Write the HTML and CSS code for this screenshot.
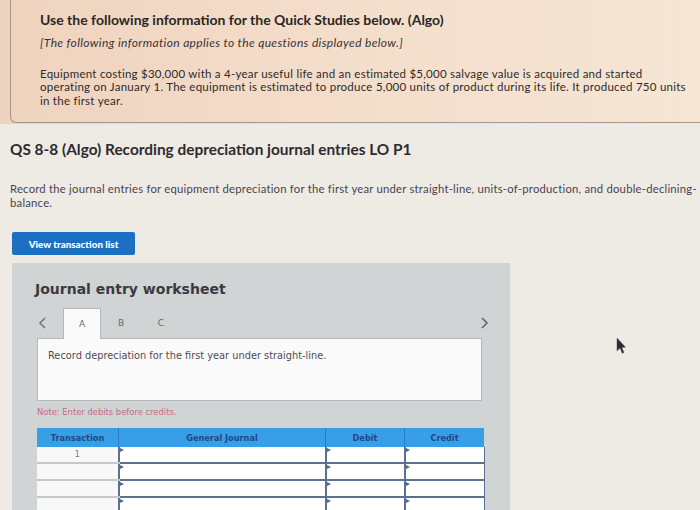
FILE: index.html
```html
<!DOCTYPE html>
<html>
<head>
<meta charset="utf-8">
<link rel="stylesheet" href="styles.css">
</head>
<body>
<div class="page">
  <header class="info-wrap">
    <section class="info">
      <h1 class="info-title">Use the following information for the Quick Studies below. (Algo)</h1>
      <p class="info-sub">[The following information applies to the questions displayed below.]</p>
      <p class="info-text">Equipment costing $30,000 with a 4-year useful life and an estimated $5,000 salvage value is acquired and started<br>operating on January 1. The equipment is estimated to produce 5,000 units of product during its life. It produced 750 units<br>in the first year.</p>
    </section>
  </header>
  <main class="question">
    <h2 class="q-title">QS 8-8 (Algo) Recording depreciation journal entries LO P1</h2>
    <p class="q-text">Record the journal entries for equipment depreciation for the first year under straight-line, units-of-production, and double-declining-<br>balance.</p>
    <button class="btn">View transaction list</button>
    <div class="worksheet">
      <h3 class="ws-title">Journal entry worksheet</h3>
      <div class="tabs">
        <span class="chev">
          <svg width="9" height="12" viewBox="0 0 9 12"><path d="M7 1 L2 6 L7 11" fill="none" stroke="#777" stroke-width="1.6"/></svg>
        </span>
        <span class="tab active">A</span>
        <span class="tab">B</span>
        <span class="tab">C</span>
        <span class="spacer"></span>
        <span class="chev">
          <svg width="9" height="12" viewBox="0 0 9 12"><path d="M2 1 L7 6 L2 11" fill="none" stroke="#666" stroke-width="1.6"/></svg>
        </span>
      </div>
      <div class="ws-content">Record depreciation for the first year under straight-line.</div>
      <p class="ws-note">Note: Enter debits before credits.</p>
      <table class="journal">
        <thead>
          <tr><th class="c-tr">Transaction</th><th class="c-gj">General Journal</th><th class="c-dr">Debit</th><th class="c-cr">Credit</th></tr>
        </thead>
        <tbody>
          <tr><td class="c-tr">1</td><td class="c-gj in"></td><td class="c-dr in"></td><td class="c-cr in"></td></tr>
          <tr><td class="c-tr"></td><td class="c-gj in"></td><td class="c-dr in"></td><td class="c-cr in"></td></tr>
          <tr><td class="c-tr"></td><td class="c-gj in"></td><td class="c-dr in"></td><td class="c-cr in"></td></tr>
          <tr><td class="c-tr"></td><td class="c-gj in"></td><td class="c-dr in"></td><td class="c-cr in"></td></tr>
        </tbody>
      </table>
    </div>
  </main>
  <svg class="cursor" width="11" height="18" viewBox="0 0 11 18"><path d="M1 1 L1 14 L4 11 L6.3 16.3 L8 15.5 L5.8 10.4 L9.5 10.2 Z" fill="#2a2a2e" stroke="#5a5a5e" stroke-width="0.5"/></svg>
</div>
</body>
</html>
```

FILE: styles.css
```css
html, body {
  margin: 0;
  padding: 0;
}
body {
  width: 700px;
  height: 510px;
  overflow: hidden;
  background: #eeebe5;
  font-family: Lato, "Open Sans", sans-serif;
  color: #2e2a2a;
}
.page {
  position: relative;
  width: 700px;
  height: 510px;
  overflow: hidden;
}
.info-wrap {
  background: linear-gradient(90deg, #efd3be 0%, #f3ddca 45%, #f6e6d5 100%);
  height: 124px;
  overflow: hidden;
}
.info {
  margin-left: 10px;
  width: 720px;
  height: 123px;
  box-sizing: border-box;
  border-left: 1px solid #a4978c;
  border-bottom: 1px solid #a4978c;
  border-bottom-left-radius: 6px;
  padding: 11px 0 0 29px;
}
.info-title {
  margin: 0;
  font-size: 14px;
  line-height: 17px;
  font-weight: 700;
  color: #2a2626;
}
.info-sub {
  margin: 7px 0 0;
  font-size: 12px;
  line-height: 15px;
  font-style: italic;
  letter-spacing: 0.35px;
  color: #3a3434;
}
.info-text {
  margin: 17px 0 0;
  font-size: 11.5px;
  line-height: 13.4px;
  letter-spacing: 0.25px;
  color: #2e2a2a;
  white-space: nowrap;
}
.question {
  padding: 16px 0 0 10px;
}
.q-title {
  margin: 0;
  font-size: 15.4px;
  line-height: 19px;
  font-weight: 700;
  color: #2e2a2e;
}
.q-text {
  margin: 23px 0 0;
  font-size: 11.3px;
  line-height: 13.6px;
  letter-spacing: 0.22px;
  color: #4a4250;
  white-space: nowrap;
}
.btn {
  display: block;
  margin: 23px 0 0 2px;
  width: 123px;
  height: 23px;
  border: none;
  border-radius: 2px;
  background: #1d6fc2;
  color: #ffffff;
  font-family: Lato, sans-serif;
  font-weight: 900;
  font-size: 9.8px;
  padding: 0;
}
.worksheet {
  margin: 8px 0 0 2px;
  width: 498px;
  height: 260px;
  box-sizing: border-box;
  background: #d1d4d5;
  padding: 17px 28px 0 25px;
  font-family: "DejaVu Sans", Verdana, sans-serif;
}
.ws-title {
  margin: 0 0 0 -2px;
  font-size: 14px;
  line-height: 18px;
  font-weight: 700;
  color: #3a3a40;
}
.tabs {
  display: flex;
  align-items: stretch;
  height: 30px;
  margin: 10px -8px 0 0;
  position: relative;
  z-index: 1;
}
.chev {
  display: flex;
  align-items: center;
  justify-content: center;
  width: 12px;
}
.chev:first-child {
  width: 11px;
  margin-right: 15px;
}
.tab {
  display: flex;
  align-items: center;
  justify-content: center;
  width: 40px;
  font-size: 9px;
  color: #6a6a6e;
}
.tab.active {
  width: 36px;
  background: #fafafa;
  border: 1px solid #b4b8bc;
  border-bottom: none;
  margin-bottom: -1px;
}
.spacer {
  flex: 1;
}
.ws-content {
  height: 63px;
  box-sizing: border-box;
  background: #fafafa;
  border: 1px solid #b4b8bc;
  padding: 11px 0 0 10px;
  font-size: 9.8px;
  line-height: 12px;
  color: #504a55;
}
.ws-note {
  margin: 6px 0 0;
  font-size: 8.4px;
  line-height: 10px;
  color: #c56a7c;
}
.journal {
  margin-top: 11px;
  width: 446px;
  border-collapse: collapse;
  table-layout: fixed;
}
.journal th {
  height: 19px;
  padding: 0;
  background: #379ee8;
  color: #1d4a86;
  font-size: 8.2px;
  font-weight: 700;
  border-left: 1px solid #2a7cc0;
}
.journal th:first-child {
  border-left: none;
}
.c-tr { width: 81px; }
.c-gj { width: 206px; }
.c-dr { width: 78px; }
.c-cr { width: 79px; }
.journal td {
  height: 15px;
  padding: 0;
  background: #f8f8f8;
  border-bottom: 2px solid #c4c8cc;
  font-size: 8px;
  color: #777;
  text-align: center;
  position: relative;
}
.journal td.in {
  background: #ffffff;
  border-left: 2px solid #5c7190;
  border-bottom: 2px solid #5c7190;
}
.journal td.c-cr {
  border-right: 1px solid #5c7190;
}
.journal td.in::before {
  content: "";
  position: absolute;
  left: 0;
  top: 1px;
  border-left: 4px solid #4b6a98;
  border-top: 2px solid transparent;
  border-bottom: 2px solid transparent;
}
.cursor {
  position: absolute;
  left: 616px;
  top: 337px;
}
```
